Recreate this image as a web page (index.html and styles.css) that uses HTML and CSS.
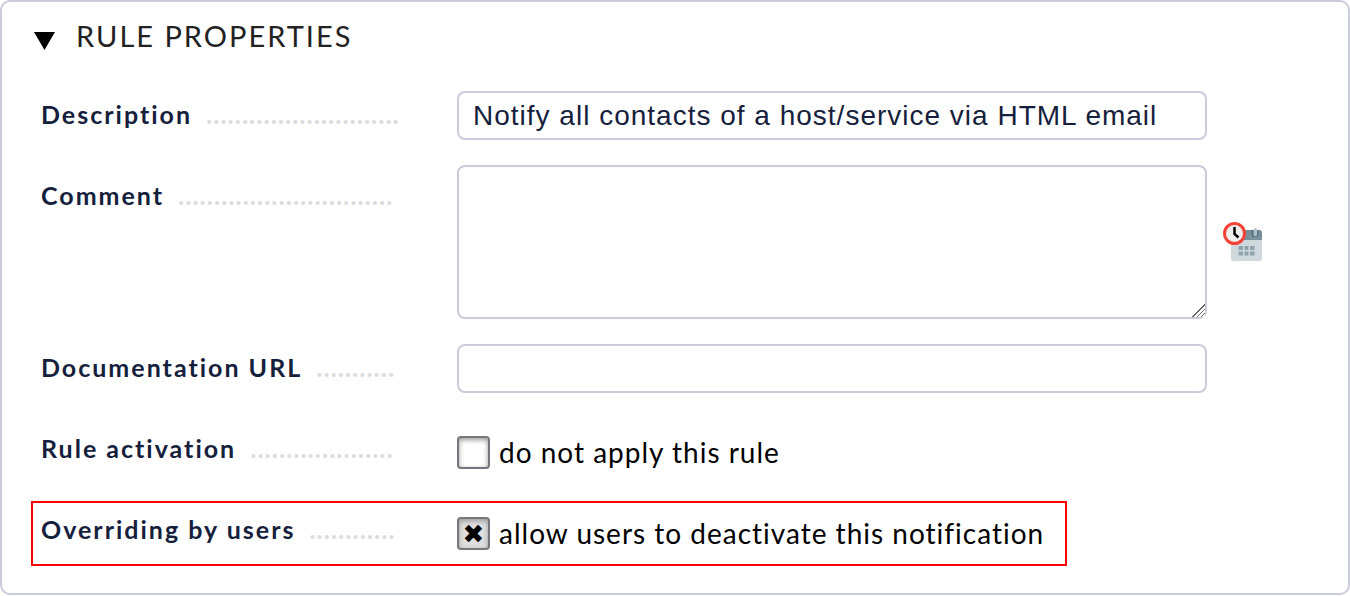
FILE: index.html
```html
<!DOCTYPE html>
<html lang="en">
<head>
<meta charset="utf-8">
<meta name="viewport" content="width=device-width, initial-scale=1">
<title>Rule properties</title>
<link rel="stylesheet" href="styles.css">
</head>
<body>
<form class="panel">
  <h1 class="heading">
    <button class="toggle" type="button" aria-label="Collapse section" aria-expanded="true"><svg class="toggle-icon" viewBox="0 0 22 18" aria-hidden="true"><path d="M0 0h21L10.500 18z"/></svg></button>
    <span>RULE PROPERTIES</span>
  </h1>
  <div class="rows">
    <div class="row">
      <div class="legend"><label for="description">Description</label><span class="dots" aria-hidden="true">...........................</span></div>
      <input class="field" id="description" type="text" value="Notify all contacts of a host/service via HTML email">
    </div>
    <div class="row row-tall">
      <div class="legend"><label for="comment">Comment</label><span class="dots" aria-hidden="true">..............................</span></div>
      <textarea class="field area" id="comment"></textarea>
      <button class="stamp" type="button" aria-label="Insert date">
        <svg class="stamp-icon" viewBox="0 0 40 40" aria-hidden="true">
          <path fill="#cfd8dc" d="M8 17h31v19.500a2.500 2.500 0 0 1-2.500 2.500h-26A2.500 2.500 0 0 1 8 36.500z"/>
          <path fill="#78909c" d="M8 18v-7.500A2.500 2.500 0 0 1 10.500 8h26a2.500 2.500 0 0 1 2.500 2.500V18z"/>
          <path fill="#546e7a" d="M28.500 8h7v3.500a3.500 3.500 0 0 1-7 0z"/>
          <path fill="#b0bec5" d="M30.500 8a1.800 1.800 0 0 1 3.600 0v4.500a1.800 1.800 0 0 1-3.600 0z"/>
          <path fill="#90a4ae" d="M15.500 24h4.500v4h-4.500zM21.500 24h4v4h-4zM27 24h4.500v4H27zM15.500 29.500h4.500v4h-4.500zM21.500 29.500h4v4h-4zM27 29.500h4.500v4H27z"/>
          <circle cx="11.500" cy="11.500" r="10" fill="#eee" stroke="#f44336" stroke-width="3"/>
          <path fill="none" stroke="#000" stroke-width="2.500" d="M11.500 5v7l4 3.500"/>
        </svg>
      </button>
    </div>
    <div class="row">
      <div class="legend"><label for="docurl">Documentation URL</label><span class="dots" aria-hidden="true">...........</span></div>
      <input class="field" id="docurl" type="text">
    </div>
    <div class="row row-check">
      <div class="legend"><span>Rule activation</span><span class="dots" aria-hidden="true">....................</span></div>
      <label class="option"><input class="box" type="checkbox"><span>do not apply this rule</span></label>
    </div>
    <div class="row row-check marked">
      <div class="legend"><span>Overriding by users</span><span class="dots" aria-hidden="true">............</span></div>
      <label class="option"><input class="box" type="checkbox" checked><span>allow users to deactivate this notification</span></label>
    </div>
  </div>
</form>
</body>
</html>
```
FILE: styles.css
```css
* {
  box-sizing: border-box;
}

body {
  margin: 0;
  background: #fff;
  color: #000;
  font-family: Lato, sans-serif;
}

.panel {
  padding: 16px 39px 27px;
  border: 2px solid #cacbdb;
  border-radius: 10px;
}

.heading {
  display: flex;
  align-items: center;
  gap: 20px;
  margin: 0 0 37px -7px;
  color: #222;
  font-size: 29px;
  font-weight: 400;
  line-height: 36px;
  letter-spacing: 2px;
}

.toggle,
.stamp {
  padding: 0;
  border: 0;
  background: none;
}

.toggle {
  display: flex;
  padding-top: 10px;
}

.toggle-icon {
  width: 22px;
  height: 18px;
}

.rows {
  display: flex;
  flex-direction: column;
  gap: 25px;
}

.row {
  display: grid;
  grid-template-columns: 354px minmax(0, 750px) auto;
  column-gap: 62px;
  align-items: start;
}

.legend {
  display: flex;
  gap: 14px;
  color: #15213c;
  font-size: 25px;
  font-weight: 700;
  line-height: 46px;
  letter-spacing: 2px;
  white-space: nowrap;
}

.dots {
  color: #dcdcdc;
  font-size: 26px;
  letter-spacing: 1px;
}

.field {
  width: 100%;
  height: 49px;
  padding: 0 14px;
  border: 2px solid #cacbdb;
  border-radius: 8px;
  background: #fff;
  color: #15213c;
  font-family: "Liberation Sans", Arial, sans-serif;
  font-size: 28px;
  letter-spacing: 1px;
}

.row-tall .legend,
.row-check .legend {
  padding-top: 7px;
}

.area {
  display: block;
  height: 154px;
}

.area::-webkit-resizer {
  background:
    linear-gradient(135deg, #fff 50%, transparent 50%),
    repeating-linear-gradient(135deg, #666 0 1px, #fff 1px 3px);
}

.stamp {
  align-self: center;
  margin-left: -46px;
}

.stamp-icon {
  display: block;
  width: 40px;
  height: 40px;
}

.row-check {
  min-height: 56px;
}

.option {
  display: flex;
  align-items: center;
  gap: 9px;
  padding-top: 16px;
  font-size: 28px;
  line-height: 36px;
  letter-spacing: 1px;
  white-space: nowrap;
}

.box {
  display: grid;
  place-items: center;
  flex: none;
  width: 33px;
  height: 33px;
  margin: 0;
  border: 2px solid #74777c;
  border-radius: 4px;
  background: #fff;
  box-shadow: inset 0 2px 5px #999;
  appearance: none;
}

.box:checked {
  background: #dedede;
}

.box:checked::after {
  content: "✖";
  font: 26px/30px "DejaVu Sans", sans-serif;
  letter-spacing: 0;
}

.marked {
  grid-template-columns: 354px auto;
  width: fit-content;
  margin: 2px 0 0 -10px;
  padding: 0 21px 12px 8px;
  border: 2px solid #f00;
}

.marked .legend {
  padding-top: 3px;
}

.marked .option {
  padding-top: 12px;
}
```
